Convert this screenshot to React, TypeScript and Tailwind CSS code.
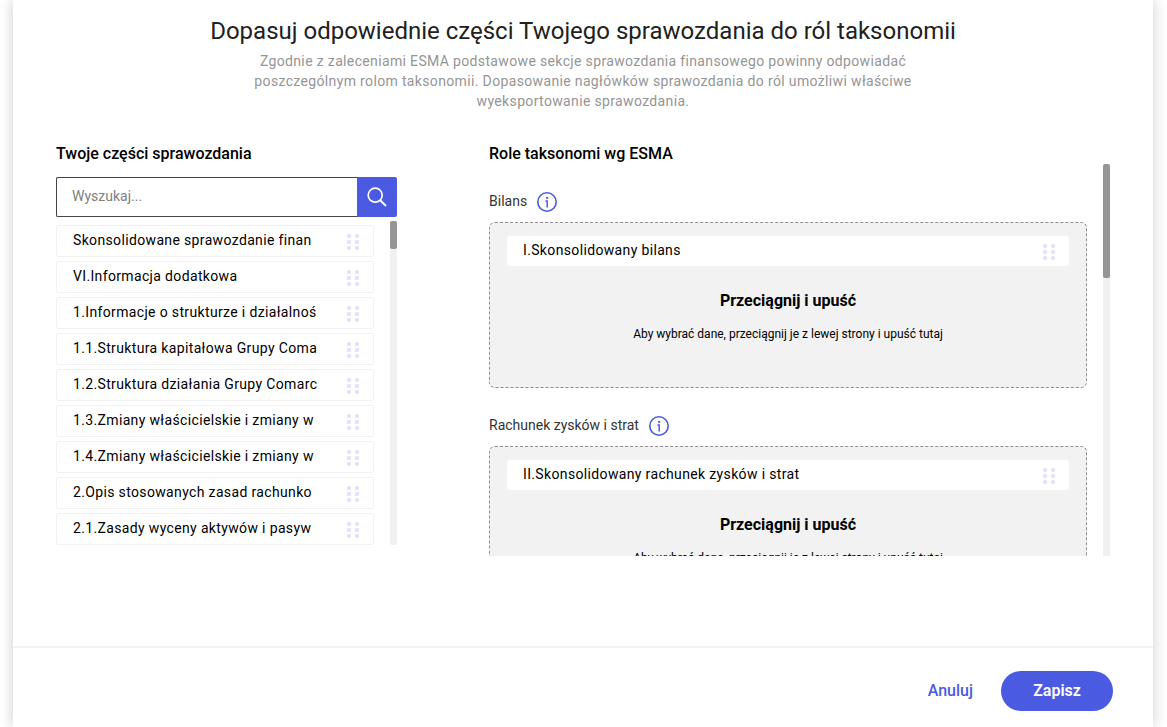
import { useState } from "react";

const sections = [
  "Skonsolidowane sprawozdanie finan",
  "VI.Informacja dodatkowa",
  "1.Informacje o strukturze i działalnoś",
  "1.1.Struktura kapitałowa Grupy Coma",
  "1.2.Struktura działania Grupy Comarc",
  "1.3.Zmiany właścicielskie i zmiany w",
  "1.4.Zmiany właścicielskie i zmiany w",
  "2.Opis stosowanych zasad rachunko",
  "2.1.Zasady wyceny aktywów i pasyw",
];

const roles = [
  { name: "Bilans", assigned: "I.Skonsolidowany bilans" },
  { name: "Rachunek zysków i strat", assigned: "II.Skonsolidowany rachunek zysków i strat" },
];

function DragDots() {
  return (
    <svg width="14" height="16" viewBox="0 0 14 16" fill="#e3e3fb" className="shrink-0" aria-hidden="true">
      {[2, 8, 14].map((y) => (
        <g key={y}>
          <circle cx="3" cy={y} r="2.2" />
          <circle cx="11" cy={y} r="2.2" />
        </g>
      ))}
    </svg>
  );
}

function SearchIcon() {
  return (
    <svg width="20" height="20" viewBox="0 0 20 20" fill="none" stroke="white" strokeWidth="1.7" aria-hidden="true">
      <circle cx="8.2" cy="8.2" r="7" />
      <path d="M13.2 13.2 19 19" strokeWidth="2" />
    </svg>
  );
}

function InfoIcon() {
  return (
    <svg width="20" height="20" viewBox="0 0 20 20" fill="none" stroke="#4a5be2" strokeWidth="1.6" aria-hidden="true">
      <circle cx="10" cy="10" r="9.2" />
      <path d="M8.4 8.9h1.8V15.6" strokeWidth="1.5" />
      <circle cx="10.1" cy="5.9" r="1.1" fill="#4a5be2" stroke="none" />
    </svg>
  );
}

function RoleZone({ name, assigned }: { name: string; assigned: string }) {
  return (
    <section className="mb-[27px]">
      <div className="mb-[11px] flex h-5 items-center gap-2.5">
        <h3 className="text-sm leading-5 text-[#333333]">{name}</h3>
        <button type="button" aria-label={`Informacje: ${name}`} className="mt-0.5">
          <InfoIcon />
        </button>
      </div>
      <div className="h-[166px] rounded-md border border-dashed border-[#8f8f8f] bg-[#f2f2f2] px-[17px] pt-[13px] text-center">
        <div className="flex h-[30px] items-center justify-between rounded-xs bg-white pr-[13px] pl-4">
          <span className="pb-0.5 text-sm tracking-wide text-black">{assigned}</span>
          <span className="pt-0.5">
            <DragDots />
          </span>
        </div>
        <p className="mt-[23px] text-base leading-6 font-bold text-black">Przeciągnij i upuść</p>
        <p className="mt-[13px] text-xs leading-4 text-black">
          Aby wybrać dane, przeciągnij je z lewej strony i upuść tutaj
        </p>
      </div>
    </section>
  );
}

export default function App() {
  const [query, setQuery] = useState("");
  const visible = sections.filter((s) => s.toLowerCase().includes(query.toLowerCase()));

  return (
    <div className="min-h-screen bg-white pr-[14px] pl-[13px] font-['Roboto',sans-serif]">
      <div className="flex min-h-screen flex-col bg-white shadow-[0_0_14px_rgba(0,0,0,0.2)]">
        <header className="px-10 pt-[15px] text-center">
          <h1 className="text-2xl leading-8 text-[#212121]">
            Dopasuj odpowiednie części Twojego sprawozdania do ról taksonomii
          </h1>
          <p className="mx-auto mt-1 max-w-[690px] text-sm leading-5 tracking-wide text-[#959595]">
            Zgodnie z zaleceniami ESMA podstawowe sekcje sprawozdania finansowego powinny odpowiadać poszczególnym rolom
            taksonomii. Dopasowanie nagłówków sprawozdania do ról umożliwi właściwe wyeksportowanie sprawozdania.
          </p>
        </header>

        <main className="flex grow gap-[92px] px-[43px] pt-[31px]">
          <section className="w-[341px] shrink-0">
            <h2 className="text-base leading-6 font-medium text-black">Twoje części sprawozdania</h2>
            <div className="mt-[11px] flex h-10">
              <input
                type="text"
                aria-label="Wyszukaj"
                placeholder="Wyszukaj..."
                value={query}
                onChange={(e) => setQuery(e.target.value)}
                className="min-w-0 grow rounded-l-xs border border-r-0 border-[#444444] px-[15px] pb-0.5 text-sm text-black outline-none placeholder:text-[#808080]"
              />
              <button
                type="button"
                aria-label="Szukaj"
                className="flex w-10 items-center justify-center rounded-r-xs bg-[#4a5be2]"
              >
                <SearchIcon />
              </button>
            </div>
            <div className="mt-1 flex h-[324px] gap-4">
              <ul className="flex min-w-0 grow flex-col gap-1 overflow-hidden pt-1">
                {visible.map((s) => (
                  <li
                    key={s}
                    className="flex h-8 shrink-0 items-center justify-between rounded-xs border border-[#f2f2f2] bg-white pr-[13px] pl-4"
                  >
                    <span className="pb-0.5 text-sm tracking-wide whitespace-nowrap text-black">{s}</span>
                    <span className="pt-0.5">
                      <DragDots />
                    </span>
                  </li>
                ))}
              </ul>
              <div className="w-[7px] shrink-0 rounded-xs bg-[#f0f0f0]">
                <div className="h-7 rounded-xs bg-[#959595]" />
              </div>
            </div>
          </section>

          <section className="min-w-0 grow">
            <h2 className="text-base leading-6 font-medium text-black">Role taksonomi wg ESMA</h2>
            <div className="-mt-0.5 flex h-[392px] gap-4">
              <div className="min-w-0 grow overflow-hidden pt-[27px]">
                {roles.map((r) => (
                  <RoleZone key={r.name} name={r.name} assigned={r.assigned} />
                ))}
              </div>
              <div className="w-[7px] shrink-0 rounded-xs bg-[#f0f0f0]">
                <div className="h-[114px] rounded-xs bg-[#959595]" />
              </div>
            </div>
          </section>
        </main>

        <footer className="flex h-[81px] items-center justify-end gap-7 border-t-2 border-[#f2f2f2] px-10 pt-1.5">
          <button type="button" className="text-base font-medium text-[#4a5be2]">
            Anuluj
          </button>
          <button type="button" className="h-10 w-28 rounded-full bg-[#4a5be2] text-base font-semibold text-white">
            Zapisz
          </button>
        </footer>
      </div>
    </div>
  );
}
